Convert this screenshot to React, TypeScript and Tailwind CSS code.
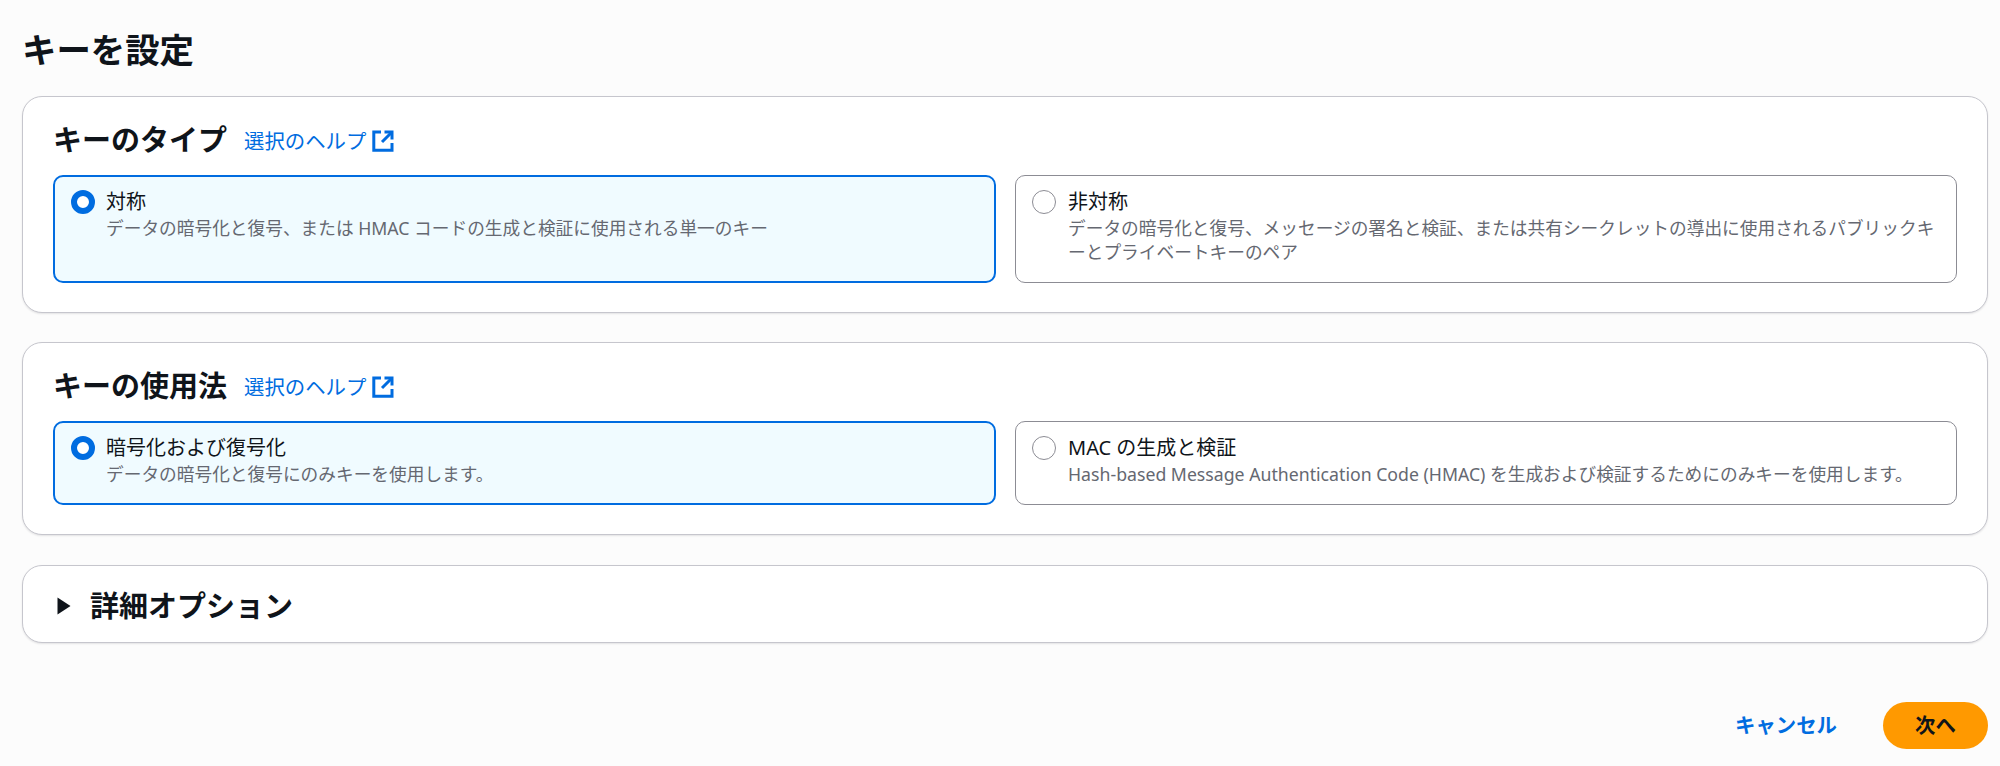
const fontStack = "font-['Noto_Sans','Noto_Sans_CJK_JP',sans-serif]";

function ExternalIcon() {
  return (
    <svg width="22" height="22" viewBox="0 0 22 22" fill="none" stroke="#006ce0" strokeWidth="3" className="shrink-0">
      <path d="M9 2H1.8v18.2H20V13" />
      <path d="M12.5 2H20v7.5" />
      <path d="M20 2 10 12" />
    </svg>
  );
}

function Radio({ checked }: { checked: boolean }) {
  if (checked) {
    return <span className="mt-[1px] h-[24px] w-[24px] shrink-0 rounded-full border-[6px] border-[#006ce0] bg-white" />;
  }
  return <span className="mt-[1px] h-[24px] w-[24px] shrink-0 rounded-full border-[1.5px] border-[#8c8c94] bg-white" />;
}

function Option({ checked, label, desc, height }: { checked: boolean; label: string; desc: string; height: string }) {
  return (
    <div
      className={`flex min-w-0 flex-1 rounded-[10px] ${height} ${
        checked
          ? "gap-[11px] border-[2.5px] border-[#006ce0] bg-[#f0fbff] pt-[12px] pr-[17px] pl-[16px]"
          : "gap-[12px] border-[1.5px] border-[#8c8c94] bg-white pt-[13px] pr-[18px] pl-[16px]"
      }`}
    >
      <Radio checked={checked} />
      <div className="min-w-0">
        <div className="text-[20px] leading-[26px] text-[#0f141a]">{label}</div>
        <div className="mt-[1px] text-[17.7px] leading-[24px] text-[#656871] [line-break:anywhere]">{desc}</div>
      </div>
    </div>
  );
}

function Section({ title, children }: { title: string; children: React.ReactNode }) {
  return (
    <section className="rounded-[20px] border border-[#c6c6cd] bg-white px-[30px] pt-[25px] pb-[29px] shadow-[0_1px_2px_rgba(0,7,22,0.1)]">
      <div className="flex h-[35px] items-center">
        <h2 className="text-[29px] leading-[36px] font-bold text-[#0f141a]">{title}</h2>
        <a className="mt-[3px] ml-[17px] flex items-center gap-[6px] text-[20.4px] text-[#006ce0]">
          選択のヘルプ
          <ExternalIcon />
        </a>
      </div>
      <div className="mt-[18px] flex gap-[19px]">{children}</div>
    </section>
  );
}

export default function App() {
  return (
    <div className={`h-[766px] w-[2000px] bg-[#fcfcfc] pr-[12px] pl-[22px] ${fontStack}`}>
      <h1 className="h-[96px] pt-[27px] text-[34.4px] leading-[46px] font-bold text-[#0f141a]">キーを設定</h1>

      <div className="flex flex-col gap-[29px]">
        <Section title="キーのタイプ">
          <Option
            checked
            height="h-[108px]"
            label="対称"
            desc="データの暗号化と復号、または HMAC コードの生成と検証に使用される単一のキー"
          />
          <Option
            checked={false}
            height="h-[108px]"
            label="非対称"
            desc="データの暗号化と復号、メッセージの署名と検証、または共有シークレットの導出に使用されるパブリックキーとプライベートキーのペア"
          />
        </Section>

        <Section title="キーの使用法">
          <Option checked height="h-[84px]" label="暗号化および復号化" desc="データの暗号化と復号にのみキーを使用します。" />
          <Option
            checked={false}
            height="h-[84px]"
            label="MAC の生成と検証"
            desc="Hash-based Message Authentication Code (HMAC) を生成および検証するためにのみキーを使用します。"
          />
        </Section>

        <section className="mt-[1px] flex h-[78px] items-center rounded-[20px] border border-[#c6c6cd] bg-white pt-[3px] pl-[34px] shadow-[0_1px_2px_rgba(0,7,22,0.1)]">
          <svg width="14" height="18" viewBox="0 0 14 18" className="shrink-0">
            <path d="M0.5 0.5 13.5 9 0.5 17.5Z" fill="#0f141a" />
          </svg>
          <h2 className="ml-[19px] text-[29px] leading-[36px] font-bold text-[#0f141a]">詳細オプション</h2>
        </section>
      </div>

      <div className="mt-[59px] flex items-center justify-end gap-[46px]">
        <button className="text-[20.4px] font-bold text-[#006ce0]">キャンセル</button>
        <button className="h-[47px] w-[105px] rounded-full bg-[#ff9900] text-[20.4px] font-bold text-[#0f141a]">次へ</button>
      </div>
    </div>
  );
}
